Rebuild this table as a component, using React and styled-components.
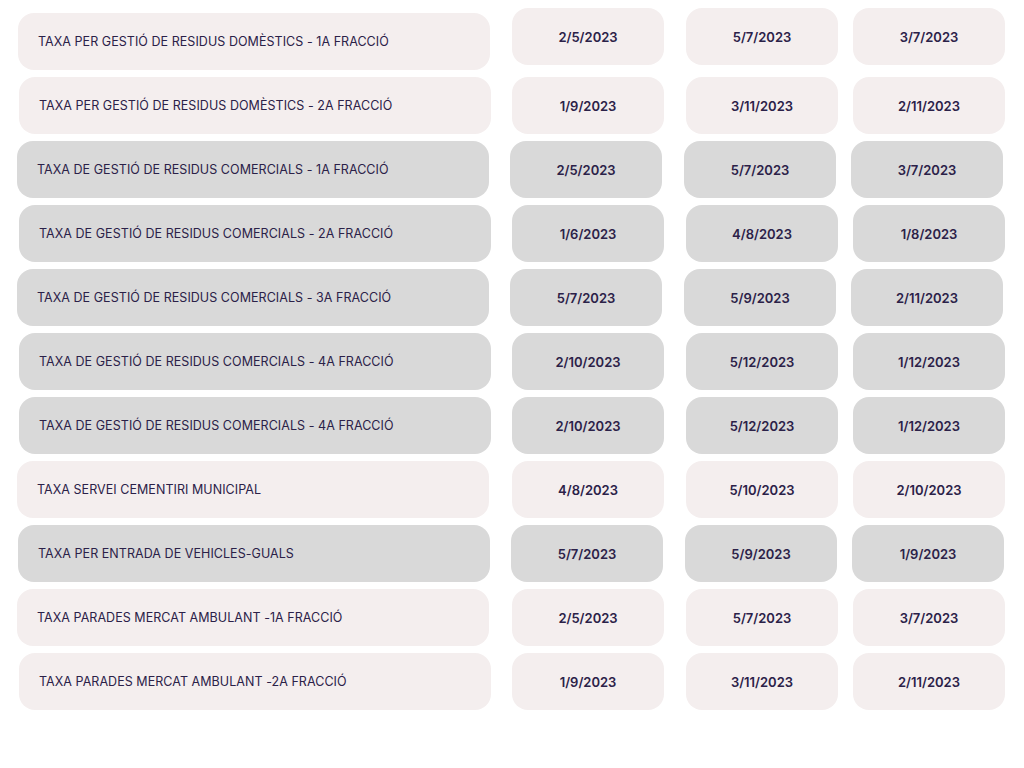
import React from 'react'
import styled, { createGlobalStyle } from 'styled-components'

const GlobalStyle = createGlobalStyle`
  body {
    margin: 0;
    background: #fff;
    font-family: Inter, "Noto Sans", sans-serif;
  }
`

const rows = [
  { label: 'TAXA PER GESTIÓ DE RESIDUS DOMÈSTICS - 1A FRACCIÓ', dates: ['2/5/2023', '5/7/2023', '3/7/2023'], tone: 'pink', shift: 1, datesShift: 1, lift: true },
  { label: 'TAXA PER GESTIÓ DE RESIDUS DOMÈSTICS - 2A FRACCIÓ', dates: ['1/9/2023', '3/11/2023', '2/11/2023'], tone: 'pink', shift: 2 },
  { label: 'TAXA DE GESTIÓ DE RESIDUS COMERCIALS - 1A FRACCIÓ', dates: ['2/5/2023', '5/7/2023', '3/7/2023'], tone: 'grey', shift: 0 },
  { label: 'TAXA DE GESTIÓ DE RESIDUS COMERCIALS - 2A FRACCIÓ', dates: ['1/6/2023', '4/8/2023', '1/8/2023'], tone: 'grey', shift: 2 },
  { label: 'TAXA DE GESTIÓ DE RESIDUS COMERCIALS - 3A FRACCIÓ', dates: ['5/7/2023', '5/9/2023', '2/11/2023'], tone: 'grey', shift: 0 },
  { label: 'TAXA DE GESTIÓ DE RESIDUS COMERCIALS - 4A FRACCIÓ', dates: ['2/10/2023', '5/12/2023', '1/12/2023'], tone: 'grey', shift: 2 },
  { label: 'TAXA DE GESTIÓ DE RESIDUS COMERCIALS - 4A FRACCIÓ', dates: ['2/10/2023', '5/12/2023', '1/12/2023'], tone: 'grey', shift: 2 },
  { label: 'TAXA SERVEI CEMENTIRI MUNICIPAL', dates: ['4/8/2023', '5/10/2023', '2/10/2023'], tone: 'pink', shift: 0, datesShift: 2 },
  { label: 'TAXA PER ENTRADA DE VEHICLES-GUALS', dates: ['5/7/2023', '5/9/2023', '1/9/2023'], tone: 'grey', shift: 1 },
  { label: 'TAXA PARADES MERCAT AMBULANT -1A FRACCIÓ', dates: ['2/5/2023', '5/7/2023', '3/7/2023'], tone: 'pink', shift: 0, datesShift: 2 },
  { label: 'TAXA PARADES MERCAT AMBULANT -2A FRACCIÓ', dates: ['1/9/2023', '3/11/2023', '2/11/2023'], tone: 'pink', shift: 2 },
]

function App() {
  return (
    <>
      <GlobalStyle />
      <Page>
        {rows.map((r, i) => (
          <Row key={i} $shift={r.shift}>
            <Label $tone={r.tone}>{r.label}</Label>
            <Dates $shift={r.datesShift || 0} $lift={r.lift}>
              {r.dates.map((d, j) => (
                <DateCell key={j} $tone={r.tone}>{d}</DateCell>
              ))}
            </Dates>
          </Row>
        ))}
      </Page>
    </>
  )
}

export default App

const Page = styled.div`
display: flex;
flex-direction: column;
gap: 7px;
padding: 13px 0 0 17px;
width: 1024px;
height: 768px;
box-sizing: border-box;
color: #2b2148;
`

const Row = styled.div`
display: flex;
align-items: flex-start;
margin-left: ${p => p.$shift}px;
`

const bg = tone => (tone === 'grey' ? '#d9d9d9' : '#f4eeee')

const Label = styled.div`
width: 472px;
height: 57px;
flex: none;
box-sizing: border-box;
padding-left: 20px;
display: flex;
align-items: center;
background: ${p => bg(p.$tone)};
border-radius: 16px;
font-size: 12.5px;
letter-spacing: 0.05px;
`

const Dates = styled.div`
display: flex;
gap: 22px;
margin-left: ${p => 21 + p.$shift}px;
margin-top: ${p => (p.$lift ? -5 : 0)}px;
& > :nth-child(3) { margin-left: -7px; }
`

const DateCell = styled.div`
width: 152px;
height: 57px;
flex: none;
display: flex;
align-items: center;
justify-content: center;
background: ${p => bg(p.$tone)};
border-radius: 16px;
font-size: 13px;
font-weight: 600;
`
